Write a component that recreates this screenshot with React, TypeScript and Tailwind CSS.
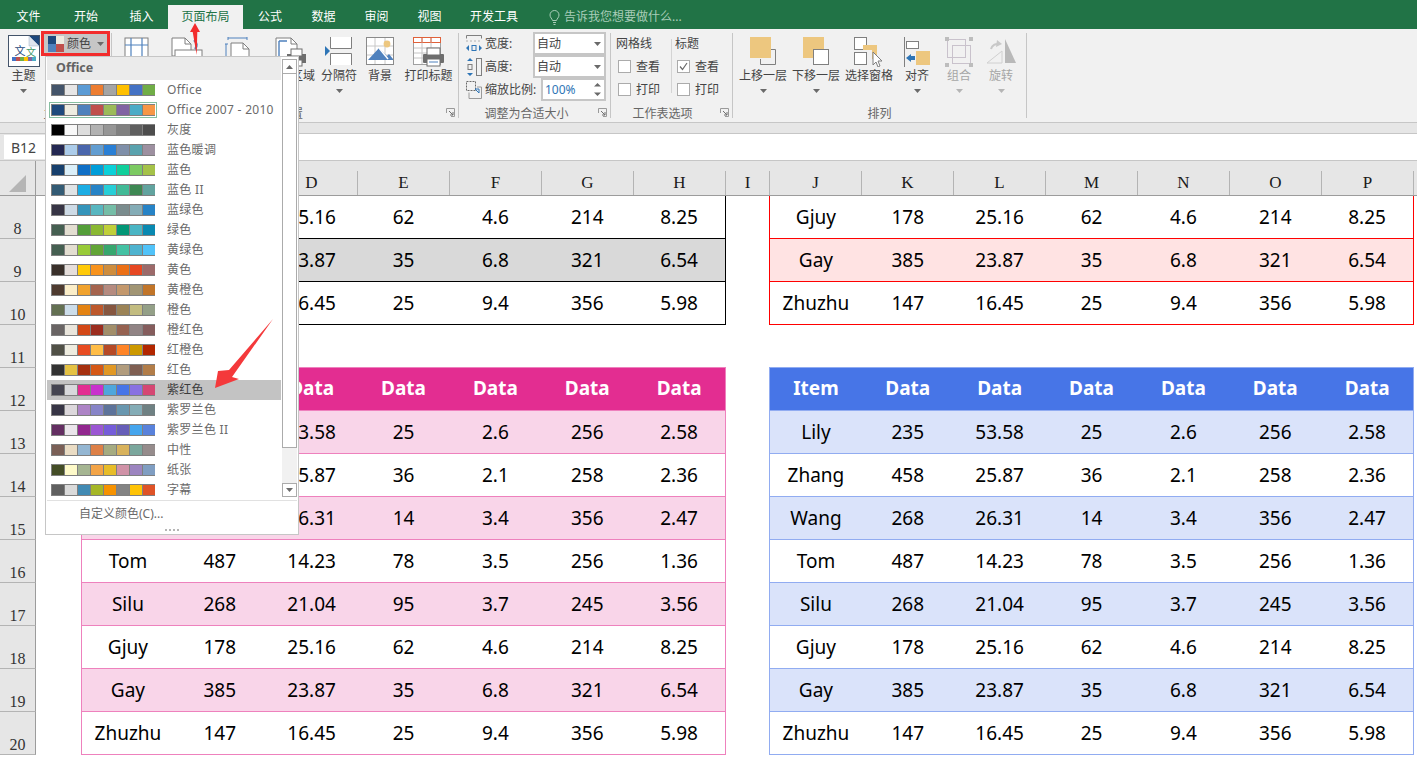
import type { ReactNode } from 'react';

const tabs = [
  { label: '文件', w: 'w-[57px]' },
  { label: '开始', w: 'w-[58px]' },
  { label: '插入', w: 'w-[53px]' },
  { label: '页面布局', w: 'w-[75px]', active: true },
  { label: '公式', w: 'w-[54px]' },
  { label: '数据', w: 'w-[53px]' },
  { label: '审阅', w: 'w-[53px]' },
  { label: '视图', w: 'w-[53px]' },
  { label: '开发工具', w: 'w-[76px]' },
];

const colorThemes = [
  { name: 'Office', colors: ['#44546a', '#e7e6e6', '#5b9bd5', '#ed7d31', '#a5a5a5', '#ffc000', '#4472c4', '#70ad47'] },
  { name: 'Office 2007 - 2010', current: true, colors: ['#1f497d', '#eeece1', '#4f81bd', '#c0504d', '#9bbb59', '#8064a2', '#4bacc6', '#f79646'] },
  { name: '灰度', colors: ['#000000', '#f8f8f8', '#dddddd', '#b2b2b2', '#969696', '#808080', '#5f5f5f', '#4d4d4d'] },
  { name: '蓝色暖调', colors: ['#242852', '#acccea', '#4a66ac', '#629dd1', '#297fd5', '#7f8fa9', '#5aa2ae', '#9d90a0'] },
  { name: '蓝色', colors: ['#17406d', '#dbeff9', '#0f6fc6', '#009dd9', '#0bd0d9', '#10cf9b', '#7cca62', '#a5c249'] },
  { name: '蓝色 II', colors: ['#335b74', '#dfe3e5', '#1cade4', '#2683c6', '#27ced7', '#42ba97', '#3e8853', '#62a39f'] },
  { name: '蓝绿色', colors: ['#373545', '#cedbe6', '#3494ba', '#58b6c0', '#75bda7', '#7a8c8e', '#84acb6', '#2683c6'] },
  { name: '绿色', colors: ['#455f51', '#e3ded1', '#549e39', '#8ab833', '#c0cf3a', '#029676', '#4ab5c4', '#0989b1'] },
  { name: '黄绿色', colors: ['#455f51', '#e3ded1', '#99cb38', '#63a537', '#37a76f', '#44c1a3', '#4eb3cf', '#51c3f9'] },
  { name: '黄色', colors: ['#39302a', '#e5dedb', '#ffca08', '#f8931d', '#ce8d3e', '#ec7016', '#e64823', '#9c6a6a'] },
  { name: '黄橙色', colors: ['#4e3b30', '#fbeec9', '#f0a22e', '#a5644e', '#b58b80', '#c3986d', '#a19574', '#c17529'] },
  { name: '橙色', colors: ['#637052', '#ccddea', '#e48312', '#bd582c', '#865640', '#9b8357', '#c2bc80', '#94a088'] },
  { name: '橙红色', colors: ['#696464', '#e9e5dc', '#d34817', '#9b2d1f', '#a28e6a', '#956251', '#918485', '#855d5d'] },
  { name: '红橙色', colors: ['#505046', '#eeece0', '#e84c22', '#ffbd47', '#b64926', '#ff8427', '#cc9900', '#b22600'] },
  { name: '红色', colors: ['#323232', '#e5c243', '#a5300f', '#d55816', '#e19825', '#b19c7d', '#7f5f52', '#b27d49'] },
  { name: '紫红色', hover: true, colors: ['#454551', '#d8d9dc', '#e32d91', '#c830cc', '#4ea6dc', '#4775e7', '#8971e1', '#d54773'] },
  { name: '紫罗兰色', colors: ['#373545', '#dcd8dc', '#ad84c6', '#8784c7', '#5d739a', '#6997af', '#84acb6', '#6f8183'] },
  { name: '紫罗兰色 II', colors: ['#632e62', '#eae5eb', '#92278f', '#9b57d3', '#755dd9', '#665eb8', '#45a5ed', '#5982db'] },
  { name: '中性', colors: ['#7a5f56', '#eadcc4', '#94b6d2', '#dd8047', '#a5ab81', '#d8b25c', '#7ba79d', '#968c8c'] },
  { name: '纸张', colors: ['#444d26', '#fefac9', '#a5b592', '#f3a447', '#e7bc29', '#d092a7', '#9c85c0', '#809ec2'] },
  { name: '字幕', colors: ['#5f5f5f', '#dadada', '#418ab3', '#a6b727', '#f69200', '#838383', '#fec306', '#df5327'] },
];

const people = [
  ['Lily', '235', '53.58', '25', '2.6', '256', '2.58'],
  ['Zhang', '458', '25.87', '36', '2.1', '258', '2.36'],
  ['Wang', '268', '26.31', '14', '3.4', '356', '2.47'],
  ['Tom', '487', '14.23', '78', '3.5', '256', '1.36'],
  ['Silu', '268', '21.04', '95', '3.7', '245', '3.56'],
  ['Gjuy', '178', '25.16', '62', '4.6', '214', '8.25'],
  ['Gay', '385', '23.87', '35', '6.8', '321', '6.54'],
  ['Zhuzhu', '147', '16.45', '25', '9.4', '356', '5.98'],
];

const headRow = ['Item', 'Data', 'Data', 'Data', 'Data', 'Data', 'Data'];

const tableStyles = {
  black: { border: 'border-[#000000]', alt: 'bg-[#d9d9d9]', head: '' },
  red: { border: 'border-[#ff0000]', alt: 'bg-[#ffe3e3]', head: '' },
  pink: { border: 'border-[#ee81bd]', alt: 'bg-[#f9d5e9]', head: 'bg-[#e32d91]' },
  blue: { border: 'border-[#91acf1]', alt: 'bg-[#dae3fa]', head: 'bg-[#4775e7]' },
};

type TableStyle = keyof typeof tableStyles;

function Caret({ disabled }: { disabled?: boolean }) {
  return (
    <svg width="7" height="4" viewBox="0 0 7 4" className="block">
      <path d="M0 0h7L3.5 4z" fill={disabled ? '#b5b5b5' : '#6a6a6a'} />
    </svg>
  );
}

function Launcher() {
  return (
    <svg width="9" height="9" viewBox="0 0 9 9" className="absolute right-[3px] bottom-[5px]">
      <path d="M0.5 5V0.5H8.5V8.5H5" fill="none" stroke="#9a9a9a" />
      <path d="M3 3l4 4M7 4v3H4" fill="none" stroke="#6f6f6f" />
    </svg>
  );
}

function LargeButton({ label, icon, w, caret, disabled }: { label: string; icon: ReactNode; w: string; caret?: boolean; disabled?: boolean }) {
  return (
    <div className={`flex flex-col items-center pt-[8px] ${w}`}>
      <div className="h-[31px] flex items-start justify-center">{icon}</div>
      <span className={`text-[12px] leading-[16px] whitespace-nowrap ${disabled ? 'text-[#a6a6a6]' : 'text-[#444444]'}`}>{label}</span>
      {caret && <div className="mt-[5px]"><Caret disabled={disabled} /></div>}
    </div>
  );
}

function Group({ label, w, labelPad, children }: { label: string; w: string; labelPad: string; children: ReactNode }) {
  return (
    <div className={`relative flex flex-col h-full ${w}`}>
      <div className="flex-1 flex min-h-0">{children}</div>
      <div className={`h-[16px] text-center text-[12px] leading-[16px] text-[#666666] ${labelPad}`}>{label}</div>
      <Launcher />
    </div>
  );
}

function ThemeIcon() {
  return (
    <svg width="32" height="32" viewBox="0 0 32 32" className="-mt-[2px]">
      <rect x="0.5" y="0.5" width="31" height="31" fill="#fff" stroke="#44546a" />
      <path d="M21 1h10v10z" fill="#1f497d" />
      <path d="M21 1v10h10" fill="#dfe5ee" stroke="#9fb0c6" strokeWidth="0.5" />
      <text x="12" y="20" fontSize="11" fill="#1f497d" textAnchor="middle">文</text>
      <text x="23" y="21" fontSize="10" fill="#3f9a6a" textAnchor="middle">文</text>
      <rect x="4" y="22" width="4" height="4" fill="#4472c4" />
      <rect x="8" y="22" width="4" height="4" fill="#c0504d" />
      <rect x="12" y="22" width="4" height="4" fill="#70ad47" />
      <rect x="16" y="22" width="4" height="4" fill="#ffc000" />
      <rect x="20" y="22" width="4" height="4" fill="#8064a2" />
      <rect x="24" y="22" width="4" height="4" fill="#4bacc6" />
    </svg>
  );
}

function MarginsIcon() {
  return (
    <svg width="26" height="30" viewBox="0 0 26 30">
      <rect x="1" y="1" width="23" height="28" fill="#fff" stroke="#7f7f7f" />
      <path d="M1 8h23M7 1v28M18 1v28" stroke="#4f81bd" fill="none" strokeWidth="1.2" />
    </svg>
  );
}

function OrientationIcon() {
  return (
    <svg width="32" height="30" viewBox="0 0 32 30">
      <path d="M1 1h13l6 6v12H1z" fill="#fff" stroke="#7f7f7f" />
      <path d="M14 1v6h6" fill="none" stroke="#7f7f7f" />
      <rect x="4" y="13" width="27" height="16" fill="#fff" stroke="#7f7f7f" />
      <path d="M23 3a6 6 0 0 1 1 9" fill="none" stroke="#4f81bd" strokeWidth="2.4" />
    </svg>
  );
}

function SizeIcon() {
  return (
    <svg width="28" height="30" viewBox="0 0 28 30">
      <path d="M3 1h19M3 0v3M22 0v3" stroke="#4f81bd" fill="none" />
      <path d="M1 7v22M0 7h3M0 29h3" stroke="#4f81bd" fill="none" />
      <path d="M6 6h12l6 6v17H6z" fill="#fff" stroke="#7f7f7f" />
      <path d="M18 6v6h6" fill="none" stroke="#7f7f7f" />
    </svg>
  );
}

function PrintAreaIcon() {
  return (
    <svg width="32" height="30" viewBox="0 0 32 30">
      <path d="M1 1h15l6 6v22H1z" fill="#fff" stroke="#7f7f7f" />
      <path d="M16 1v6h6" fill="none" stroke="#7f7f7f" />
      <path d="M4 4h8M4 4v22" stroke="#4f81bd" strokeWidth="1.4" fill="none" />
      <rect x="12" y="17" width="19" height="9" fill="#6e6e6e" />
      <rect x="16" y="12" width="11" height="7" fill="#fff" stroke="#6e6e6e" />
      <rect x="16" y="23" width="11" height="6" fill="#fff" stroke="#6e6e6e" />
    </svg>
  );
}

function BreaksIcon() {
  return (
    <svg width="28" height="28" viewBox="0 0 28 28">
      <path d="M5.5 0v11.500h21V0" fill="#fff" stroke="#7f7f7f" />
      <path d="M5.5 28V16.500h21V28" fill="#fff" stroke="#7f7f7f" />
      <path d="M0 9l5 5-5 5z" fill="#2e75b6" />
    </svg>
  );
}

function BackgroundIcon() {
  return (
    <svg width="28" height="28" viewBox="0 0 28 28">
      <rect x="0.5" y="0.5" width="27" height="27" fill="#fff" stroke="#8a8a8a" />
      <path d="M1 9h26M1 18h26M9 1v26M19 1v26" stroke="#c8c8c8" />
      <circle cx="21" cy="7" r="3.4" fill="#edc77f" />
      <path d="M2 23L13 11l8 8 2-2 4 5v1H2z" fill="#4f81bd" />
      <path d="M13 11l9 11" stroke="#fff" strokeWidth="1.4" />
    </svg>
  );
}

function PrintTitlesIcon() {
  return (
    <svg width="32" height="30" viewBox="0 0 32 30">
      <rect x="0.5" y="0.5" width="27" height="27" fill="#fff" stroke="#a0a0a0" />
      <rect x="0.5" y="0.5" width="27" height="5" fill="#fff" stroke="#e0613a" />
      <path d="M9 1v26M18 1v26M1 11h26M1 16h26M1 21h26" stroke="#c4c4c4" />
      <path d="M9 1v5M18 1v5" stroke="#e0613a" />
      <rect x="10" y="17" width="21" height="9" rx="1" fill="#6e6e6e" />
      <rect x="14" y="11" width="13" height="7" fill="#fff" stroke="#6e6e6e" />
      <rect x="14" y="22" width="13" height="7" fill="#fff" stroke="#6e6e6e" />
      <path d="M16 25h9" stroke="#4f81bd" />
    </svg>
  );
}

function BringForwardIcon() {
  return (
    <svg width="28" height="28" viewBox="0 0 28 28">
      <path d="M22 12.500h4.500v15h-15V22" fill="none" stroke="#7f7f7f" />
      <rect x="1" y="0" width="21" height="21" fill="#edc77f" />
    </svg>
  );
}

function SendBackwardIcon() {
  return (
    <svg width="28" height="28" viewBox="0 0 28 28">
      <rect x="1" y="0" width="21" height="21" fill="#edc77f" />
      <rect x="11.5" y="12.500" width="15" height="15" fill="#fff" stroke="#7f7f7f" />
    </svg>
  );
}

function SelectionPaneIcon() {
  return (
    <svg width="30" height="30" viewBox="0 0 30 30">
      <rect x="0.5" y="0.5" width="12" height="12" fill="#fff" stroke="#7f7f7f" />
      <rect x="0.5" y="15.5" width="12" height="12" fill="#fff" stroke="#7f7f7f" />
      <path d="M9 8h14v14h-5V13H9z" fill="#edc77f" />
      <path d="M19 15v13l3-3 2 5 2-1-2-5h4z" fill="#fff" stroke="#7f7f7f" />
    </svg>
  );
}

function AlignIcon() {
  return (
    <svg width="28" height="30" viewBox="0 0 28 30">
      <path d="M1.5 0v30" stroke="#7f7f7f" />
      <rect x="3.5" y="4.500" width="12" height="7" fill="#fff" stroke="#7f7f7f" />
      <rect x="13" y="14" width="14" height="14" fill="#edc77f" />
      <path d="M3 21l5-4v2h4v4H8v2z" fill="#2e75b6" />
    </svg>
  );
}

function GroupIcon() {
  return (
    <svg width="28" height="30" viewBox="0 0 28 30">
      <rect x="2.5" y="2.500" width="18" height="18" fill="none" stroke="#c9c2cc" />
      <rect x="7.5" y="8.500" width="18" height="18" fill="none" stroke="#c9c2cc" />
      <path d="M0 0h4v4H0zM24 0h4v4h-4zM0 26h4v4H0zM24 26h4v4h-4z" fill="#bdbdbd" />
    </svg>
  );
}

function RotateIcon() {
  return (
    <svg width="30" height="30" viewBox="0 0 30 30">
      <path d="M19 2l11 24H19z" fill="#b9b9b9" />
      <path d="M1 26l15-12v12z" fill="none" stroke="#d0d0d0" />
      <path d="M5 12a7 7 0 0 1 8-5" fill="none" stroke="#c8c8c8" strokeWidth="2" />
      <path d="M11 3l5 4-6 3z" fill="#c8c8c8" />
    </svg>
  );
}

function WidthIcon() {
  return (
    <svg width="16" height="18" viewBox="0 0 16 18">
      <path d="M0.5 3.500V0.500h15v3" fill="none" stroke="#7f7f7f" />
      <path d="M0 6h16" stroke="#b0b0b0" strokeDasharray="2 2" />
      <path d="M0 13l3-3v6zM16 13l-3-3v6z" fill="#2e75b6" />
      <rect x="6" y="10.500" width="4" height="5" fill="none" stroke="#2e75b6" />
    </svg>
  );
}

function HeightIcon() {
  return (
    <svg width="16" height="18" viewBox="0 0 16 18">
      <rect x="10.5" y="0.500" width="5" height="17" fill="none" stroke="#7f7f7f" />
      <path d="M4 0l3 3H1zM4 18l-3-3h6z" fill="#2e75b6" />
      <rect x="2" y="6.500" width="4" height="5" fill="none" stroke="#7f7f7f" />
    </svg>
  );
}

function ScaleIcon() {
  return (
    <svg width="16" height="18" viewBox="0 0 16 18">
      <rect x="0.5" y="0.500" width="9" height="9" fill="none" stroke="#6a6a6a" strokeDasharray="2 1" />
      <path d="M3 11.500v6h12.500V6H11" fill="none" stroke="#9a9a9a" />
      <path d="M9 8h4v4M13 12L9 8" fill="none" stroke="#2e75b6" />
    </svg>
  );
}

function SizeRow({ icon, label, value, boxW, spin }: { icon: ReactNode; label: string; value: string; boxW: string; spin?: boolean }) {
  return (
    <div className="flex items-center h-[23px]">
      <div className="w-[19px] flex">{icon}</div>
      <span className="text-[12px] text-[#444444] whitespace-nowrap">{label}</span>
      <div className={`ml-auto h-[23px] border-2 border-[#c6c6c6] bg-white flex items-center justify-between pl-[2px] pr-[3px] ${boxW}`}>
        <span className={`text-[12px] ${spin ? 'text-[#2e75b6]' : 'text-[#444444]'}`}>{value}</span>
        {spin ? (
          <svg width="7" height="15" viewBox="0 0 7 15">
            <path d="M3.5 1L7 4.500H0zM0 10.500h7L3.500 14z" fill="#6a6a6a" />
          </svg>
        ) : (
          <Caret />
        )}
      </div>
    </div>
  );
}

function CheckRow({ label, checked }: { label: string; checked?: boolean }) {
  return (
    <div className="flex items-center h-[23px] gap-[5px] pl-[2px]">
      <div className="w-[13px] h-[13px] border border-[#ababab] bg-white flex items-center justify-center">
        {checked && (
          <svg width="9" height="9" viewBox="0 0 9 9">
            <path d="M1 4.500l2.500 3L8 1" fill="none" stroke="#6a6a6a" strokeWidth="1.2" />
          </svg>
        )}
      </div>
      <span className="text-[12px] text-[#444444]">{label}</span>
    </div>
  );
}

function Ribbon() {
  return (
    <div className="h-[94px] bg-[#f1f1f1] border-b border-[#c6c6c6] flex">
      <Group label="主题" w="w-[111px]" labelPad="pr-0">
        <div className="ml-[6px] w-[35px]">
          <LargeButton label="主题" icon={<ThemeIcon />} w="w-[35px]" caret />
        </div>
        <div className="mt-[2px] h-[25px] w-[69px] bg-[#c6c6c6] border-[3px] border-[#f22c2c] flex items-center pl-[4px] gap-[3px]">
          <svg width="16" height="16" viewBox="0 0 16 16" className="shrink-0">
            <rect width="8" height="8" fill="#1f497d" />
            <rect x="8" width="8" height="8" fill="#eeece1" />
            <rect y="8" width="8" height="8" fill="#4f81bd" />
            <rect x="8" y="8" width="8" height="8" fill="#c0504d" />
          </svg>
          <span className="text-[12px] text-[#444444]">颜色</span>
          <div className="ml-[3px]"><Caret /></div>
        </div>
      </Group>
      <div className="w-px my-[4px] bg-[#c6c6c6]" />
      <Group label="页面设置" w="w-[346px]" labelPad="pr-[12px]">
        <LargeButton label="页边距" icon={<MarginsIcon />} w="w-[49px]" caret />
        <LargeButton label="纸张方向" icon={<OrientationIcon />} w="w-[52px]" caret />
        <LargeButton label="纸张大小" icon={<SizeIcon />} w="w-[52px]" caret />
        <LargeButton label="打印区域" icon={<PrintAreaIcon />} w="w-[52px]" caret />
        <LargeButton label="分隔符" icon={<BreaksIcon />} w="w-[44px]" caret />
        <LargeButton label="背景" icon={<BackgroundIcon />} w="w-[38px]" />
        <LargeButton label="打印标题" icon={<PrintTitlesIcon />} w="w-[59px]" />
      </Group>
      <div className="w-px my-[4px] bg-[#c6c6c6]" />
      <Group label="调整为合适大小" w="w-[151px]" labelPad="pr-[16px]">
        <div className="flex-1 pt-[3px] pl-[7px] pr-[4px]">
          <SizeRow icon={<WidthIcon />} label="宽度:" value="自动" boxW="w-[73px]" />
          <SizeRow icon={<HeightIcon />} label="高度:" value="自动" boxW="w-[73px]" />
          <SizeRow icon={<ScaleIcon />} label="缩放比例:" value="100%" boxW="w-[65px]" spin />
        </div>
      </Group>
      <div className="w-px my-[4px] bg-[#c6c6c6]" />
      <Group label="工作表选项" w="w-[121px]" labelPad="pr-[18px]">
        <div className="flex pt-[7px] pl-[5px]">
          <div className="w-[55px]">
            <div className="text-[12px] leading-[16px] text-[#444444] mb-[3px]">网格线</div>
            <CheckRow label="查看" />
            <CheckRow label="打印" />
          </div>
          <div className="w-px h-[54px] mt-[3px] bg-[#d4d4d4]" />
          <div className="pl-[3px]">
            <div className="text-[12px] leading-[16px] text-[#444444] mb-[3px]">标题</div>
            <CheckRow label="查看" checked />
            <CheckRow label="打印" />
          </div>
        </div>
      </Group>
      <div className="w-px my-[4px] bg-[#c6c6c6]" />
      <div className="relative flex flex-col h-full w-[293px]">
        <div className="flex-1 flex pl-[3px]">
          <LargeButton label="上移一层" icon={<BringForwardIcon />} w="w-[54px]" caret />
          <LargeButton label="下移一层" icon={<SendBackwardIcon />} w="w-[52px]" caret />
          <LargeButton label="选择窗格" icon={<SelectionPaneIcon />} w="w-[54px]" />
          <LargeButton label="对齐" icon={<AlignIcon />} w="w-[42px]" caret />
          <LargeButton label="组合" icon={<GroupIcon />} w="w-[42px]" caret disabled />
          <LargeButton label="旋转" icon={<RotateIcon />} w="w-[42px]" caret disabled />
        </div>
        <div className="h-[16px] text-center text-[12px] leading-[16px] text-[#666666]">排列</div>
      </div>
      <div className="w-px my-[4px] bg-[#c6c6c6]" />
    </div>
  );
}

const columns = [
  { label: 'A', w: 'w-[46px]' },
  { label: 'B', w: 'w-[92px]' },
  { label: 'C', w: 'w-[92px]' },
  { label: 'D', w: 'w-[92px]' },
  { label: 'E', w: 'w-[92px]' },
  { label: 'F', w: 'w-[92px]' },
  { label: 'G', w: 'w-[92px]' },
  { label: 'H', w: 'w-[92px]' },
  { label: 'I', w: 'w-[44px]' },
  { label: 'J', w: 'w-[92px]' },
  { label: 'K', w: 'w-[92px]' },
  { label: 'L', w: 'w-[92px]' },
  { label: 'M', w: 'w-[92px]' },
  { label: 'N', w: 'w-[92px]' },
  { label: 'O', w: 'w-[92px]' },
  { label: 'P', w: 'w-[92px]' },
];

function ColumnHeader() {
  return (
    <div className="h-[35px] flex items-end bg-[#e6e6e6] border-b border-[#9c9c9c] [font-family:'Liberation_Serif',serif]">
      <div className="w-[36px] h-[34px] border-r border-[#9c9c9c] flex items-end justify-center pb-[3px]">
        <svg width="17" height="17" viewBox="0 0 17 17">
          <path d="M17 0v17H0z" fill="#b5b5b5" />
        </svg>
      </div>
      {columns.map((c) => (
        <div key={c.label} className={`h-[24px] border-r border-[#b4b4b4] flex items-center justify-center text-[17px] leading-[20px] text-[#1a1a1a] ${c.w}`}>
          {c.label}
        </div>
      ))}
    </div>
  );
}

function TableCells({ cells, style, fill, bold }: { cells?: string[]; style: TableStyle; fill?: boolean; bold?: boolean }) {
  const s = tableStyles[style];
  if (!cells) return <div className={`w-[645px] border-b ${s.border}`} />;
  return (
    <div className={`w-[645px] flex items-center border-x border-b ${s.border} ${bold ? s.head : fill ? s.alt : 'bg-white'}`}>
      {cells.map((c, i) => (
        <div key={i} className={`flex-1 text-center text-[19px] leading-[26px] ${bold ? 'font-bold text-white pb-[2px]' : 'text-black'}`}>
          {c}
        </div>
      ))}
    </div>
  );
}

function SheetRow({ n, left, right, head, fillLeft, fillRight, leftStyle, rightStyle }: {
  n: number;
  left?: string[];
  right?: string[];
  head?: boolean;
  fillLeft?: boolean;
  fillRight?: boolean;
  leftStyle: TableStyle;
  rightStyle: TableStyle;
}) {
  return (
    <div className="flex h-[43px]">
      <div className="w-[36px] bg-[#e6e6e6] border-r border-b border-r-[#9c9c9c] border-b-[#b4b4b4] flex items-end justify-center text-[16px] leading-[18px] text-[#333333] [font-family:'Liberation_Serif',serif]">
        {n}
      </div>
      <div className="w-[45px]" />
      <TableCells cells={left} style={leftStyle} fill={fillLeft} bold={head} />
      <div className="w-[43px]" />
      <TableCells cells={right} style={rightStyle} fill={fillRight} bold={head} />
    </div>
  );
}

function ThemeMenu() {
  return (
    <div className="absolute left-[45px] top-[56px] w-[254px] h-[479px] bg-white border border-[#c6c6c6] flex flex-col text-[12px] text-[#6a6a6a]">
      <div className="flex h-[443px]">
        <div className="w-[235px] pl-[1px] shrink-0">
          <div className="h-[23px] bg-[#ebebeb] flex items-center pl-[9px] font-bold text-[12.500px] text-[#636363]">Office</div>
          {colorThemes.map((t) => (
            <div key={t.name} className={`h-[20px] flex items-center pl-[2px] ${t.hover ? 'bg-[#c3c3c3]' : ''}`}>
              <div className={`w-[108px] h-[16px] flex items-center justify-center ${t.current ? 'border border-[#86bfa0]' : ''}`}>
                <div className="w-[104px] h-[12px] bg-[#808080] flex items-stretch gap-px pl-px py-px shrink-0">
                  {t.colors.map((c, i) => (
                    <div key={i} className="w-[12px] shrink-0" style={{ backgroundColor: c }} />
                  ))}
                </div>
              </div>
              <span className={`ml-[10px] whitespace-nowrap tracking-[0.3px] ${t.hover ? 'text-[#3c3c3c]' : ''}`}>{t.name}</span>
            </div>
          ))}
        </div>
        <div className="ml-[1px] w-[15px] pt-[2px] flex flex-col">
          <div className="h-[15px] border border-[#ababab] bg-white flex items-center justify-center">
            <svg width="7" height="4" viewBox="0 0 7 4"><path d="M0 4h7L3.500 0z" fill="#6a6a6a" /></svg>
          </div>
          <div className="h-[374px] border-x border-b border-[#ababab] bg-white" />
          <div className="h-[35px] bg-[#f1f1f1]" />
          <div className="h-[14px] border border-[#ababab] bg-white flex items-center justify-center">
            <Caret />
          </div>
        </div>
      </div>
      <div className="mx-[1px] h-px bg-[#e1e1e1]" />
      <div className="h-[25px] pl-[33px] flex items-center">自定义颜色(C)...</div>
      <div className="h-[8px] flex items-center justify-center gap-[2px]">
        {[0, 1, 2, 3].map((d) => (
          <div key={d} className="w-[2px] h-[2px] bg-[#b5b5b5]" />
        ))}
      </div>
    </div>
  );
}

export default function App() {
  const top = people.slice(5);
  return (
    <div className="relative w-[1417px] h-[758px] overflow-hidden bg-white [font-family:'Noto_Sans','Noto_Sans_CJK_SC',sans-serif]">
      {/* tab strip */}
      <div className="h-[29px] bg-[#217346] flex items-end text-[12px] text-white">
        {tabs.map((t) => (
          <div key={t.label} className={`h-[24px] flex items-center justify-center ${t.w} ${t.active ? 'bg-[#f1f1f1] text-[#217346]' : ''}`}>
            {t.label}
          </div>
        ))}
        <div className="h-[24px] ml-[17px] flex items-center gap-[4px] text-[#a9cdb9]">
          <svg width="11" height="15" viewBox="0 0 11 15">
            <path d="M3.500 10.500C3 8.500 1 7.500 1 5a4.500 4.500 0 0 1 9 0c0 2.500-2 3.500-2.500 5.500zM4 12.500h3M4.500 14.500h2" fill="none" stroke="#a9cdb9" />
          </svg>
          告诉我您想要做什么...
        </div>
      </div>

      <Ribbon />

      <div className="h-[10px] bg-[#e6e6e6]" />

      {/* formula bar */}
      <div className="h-[28px] bg-[#e6e6e6] border-y border-[#c6c6c6] flex">
        <div className="ml-[4px] w-[90px] my-[1px] bg-white flex items-center pl-[7px] text-[14px] text-[#444444]">B12</div>
        <div className="flex-1 ml-[100px] bg-white" />
      </div>

      <ColumnHeader />

      {top.map((p, i) => (
        <SheetRow key={p[0]} n={8 + i} left={p} right={p} leftStyle="black" rightStyle="red" fillLeft={i === 1} fillRight={i === 1} />
      ))}
      <SheetRow n={11} leftStyle="pink" rightStyle="blue" />
      <SheetRow n={12} left={headRow} right={headRow} head leftStyle="pink" rightStyle="blue" />
      {people.map((p, i) => (
        <SheetRow key={p[0]} n={13 + i} left={p} right={p} leftStyle="pink" rightStyle="blue" fillLeft={i % 2 === 0} fillRight={i % 2 === 0} />
      ))}

      <ThemeMenu />

      {/* red annotation arrows */}
      <svg className="absolute left-[186px] top-[20px]" width="18" height="38" viewBox="0 0 18 38">
        <path d="M9 3L4 12H6.700L10.700 35 11.300 12H14z" fill="#f22c2c" />
      </svg>
      <svg className="absolute left-[210px] top-[315px]" width="70" height="78" viewBox="0 0 70 78">
        <path d="M63 4L19 55 8 56 5 73 29 64 22 62z" fill="#f4393b" />
      </svg>
    </div>
  );
}
